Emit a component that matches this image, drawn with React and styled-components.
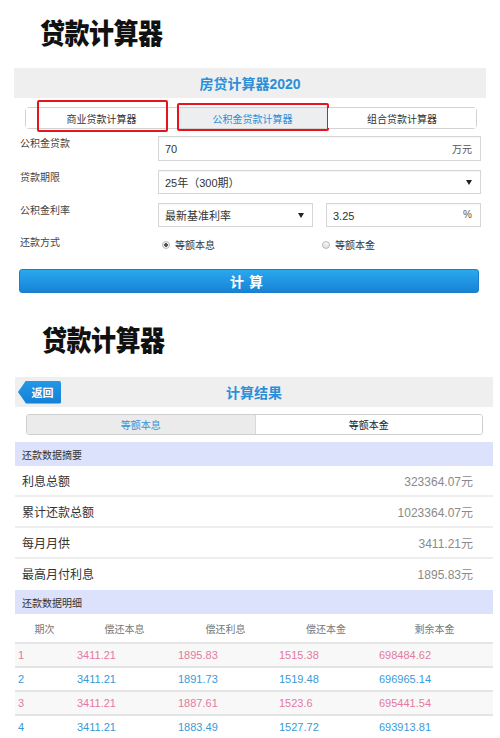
import React from 'react';
import styled, { createGlobalStyle } from 'styled-components';

const GlobalStyle = createGlobalStyle`
  body {
    margin: 0;
    background: #fff;
    font-family: "Liberation Sans", "Noto Sans CJK SC", sans-serif;
    color: #333;
  }
`;

const Page = styled.div`
  width: 500px;
  height: 738px;
  overflow: hidden;
`;

const BigTitle = styled.h1`
  margin: 0;
  padding: ${(p) => p.$top}px 0 0 ${(p) => p.$left}px;
  font-family: "Noto Sans CJK SC", serif;
  font-weight: 900;
  font-size: 25px;
  line-height: 34px;
  letter-spacing: -0.5px;
  color: #111;
  transform: scaleY(1.15);
  transform-origin: left top;
`;

const TopBar = styled.div`
  margin: ${(p) => p.$mt}px ${(p) => p.$mr}px 0 ${(p) => p.$ml}px;
  height: 30px;
  background: #efefef;
  display: grid;
  grid-template-columns: 1fr auto 1fr;
  align-items: center;
`;

const BarTitle = styled.div`
  grid-column: 2;
  color: #2b8fd8;
  font-weight: bold;
  font-size: 14px;
`;

const Tabs = styled.div`
  margin: 9px 23px 0 25px;
  height: 22px;
  border: 1px solid #d2d2d2;
  border-radius: 4px;
  display: grid;
  grid-template-columns: 151px 151px 1fr;
  box-sizing: border-box;
`;

const Tab = styled.div`
  position: relative;
  display: flex;
  align-items: center;
  justify-content: center;
  font-size: 10px;
  color: ${(p) => (p.$active ? '#2b8fd8' : '#333')};
  background: ${(p) => (p.$active ? '#eceef0' : '#fff')};
`;

const RedMark = styled.span`
  position: absolute;
  left: ${(p) => p.$l}px;
  right: ${(p) => p.$r}px;
  top: ${(p) => p.$t}px;
  bottom: ${(p) => p.$b}px;
  border: 2px solid #e8141c;
  border-radius: 2px;
  pointer-events: none;
`;

const Form = styled.div`
  margin: 7px 19px 0 20px;
  display: flex;
  flex-direction: column;
  gap: 9px;
`;

const Row = styled.div`
  display: grid;
  grid-template-columns: 138px 1fr;
  align-items: start;
`;

const Label = styled.div`
  font-size: 10px;
  line-height: 14px;
  color: #444;
  padding-top: ${(p) => p.$pt || 0}px;
`;

const Fields = styled.div`
  display: grid;
  grid-template-columns: ${(p) => (p.$split ? '1fr 1fr' : '1fr')};
  gap: 13px;
`;

const Field = styled.div`
  height: ${(p) => p.$h || 24}px;
  border: 1px solid #d6d6d6;
  box-shadow: inset 0 1px 1px rgba(0, 0, 0, 0.04);
  box-sizing: border-box;
  display: flex;
  align-items: center;
  justify-content: space-between;
  padding: 0 8px 0 6px;
  font-size: 11px;
  color: #333;
`;

const Unit = styled.span`
  color: #555;
  font-size: 10px;
  align-self: ${(p) => (p.$top ? 'flex-start' : 'center')};
  margin-top: ${(p) => (p.$top ? 5 : 0)}px;
`;

const Caret = styled.span`
  width: 0;
  height: 0;
  border-left: 3px solid transparent;
  border-right: 3px solid transparent;
  border-top: 5px solid #222;
`;

const Radios = styled.div`
  display: grid;
  grid-template-columns: 160px 1fr;
  padding-left: 4px;
  padding-top: 1px;
`;

const RadioItem = styled.label`
  display: flex;
  align-items: center;
  gap: 5px;
  font-size: 10px;
  color: #333;
`;

const Dot = styled.span`
  width: 8px;
  height: 8px;
  border-radius: 50%;
  border: 1px solid #b8b8b8;
  background: ${(p) => (p.$on ? 'radial-gradient(circle, #555 0 1.6px, #f2f2f2 2px)' : 'linear-gradient(#fafafa, #ddd)')};
  box-sizing: border-box;
`;

const CalcButton = styled.button`
  display: block;
  margin: 17px 21px 0 19px;
  width: calc(100% - 40px);
  height: 24px;
  border: 1px solid #1b7dcc;
  border-radius: 3px;
  background: linear-gradient(#2aa8ee, #1783d6);
  color: #fff;
  font-family: "Noto Sans CJK SC", sans-serif;
  font-weight: bold;
  font-size: 14px;
  letter-spacing: 5px;
  padding: 0;
  line-height: 20px;
`;

const BackButton = styled.div`
  grid-column: 1;
  justify-self: start;
  margin-left: 3px;
  width: 43px;
  height: 23px;
  background: linear-gradient(#2497e6, #1381d6);
  clip-path: polygon(0 50%, 8px 0, 100% 0, 100% 100%, 8px 100%);
  border-radius: 0 2px 2px 0;
  color: #fff;
  font-weight: bold;
  font-size: 11px;
  display: flex;
  align-items: center;
  justify-content: center;
  padding-left: 6px;
  box-sizing: border-box;
`;

const Segment = styled.div`
  margin: 7px 17px 0 26px;
  height: 21px;
  border: 1px solid #cfcfcf;
  border-radius: 3px;
  display: grid;
  grid-template-columns: 1fr 1fr;
  box-sizing: border-box;
  overflow: hidden;
`;

const SegItem = styled.div`
  display: flex;
  align-items: center;
  justify-content: center;
  font-size: 10px;
  color: ${(p) => (p.$active ? '#3a8fd9' : '#222')};
  background: ${(p) => (p.$active ? '#ebebeb' : '#fff')};
  border-left: ${(p) => (p.$active ? 'none' : '1px solid #d8d8d8')};
`;

const Result = styled.div`
  margin: 7px 7px 0 15px;
`;

const SectionHead = styled.div`
  height: 24px;
  background: #dde2fc;
  display: flex;
  align-items: center;
  padding-left: 7px;
  font-size: 10px;
  color: #333;
`;

const SumRow = styled.div`
  height: 29px;
  border-bottom: 2px solid ${(p) => (p.$last ? 'transparent' : '#eeeeee')};
  display: flex;
  align-items: center;
  justify-content: space-between;
  padding: 0 20px 0 7px;
  font-size: 12px;
`;

const SumValue = styled.span`
  color: #8a8a8a;
`;

const Table = styled.div`
  display: grid;
  grid-template-columns: 59px 101px 101px 100px 1fr;
`;

const HeadCell = styled.div`
  height: 28px;
  border-bottom: 2px solid #e6e6e6;
  display: flex;
  align-items: center;
  justify-content: center;
  font-size: 10px;
  color: #777;
`;

const Cell = styled.div`
  height: 22px;
  border-bottom: 2px solid #e4e4e4;
  display: flex;
  align-items: center;
  padding-left: 3px;
  font-size: 11px;
  color: ${(p) => (p.$odd ? '#e5799f' : '#3a9ad8')};
  background: ${(p) => (p.$odd ? '#f8f8f8' : '#fff')};
`;

const summary = [
  ['利息总额', '323364.07元'],
  ['累计还款总额', '1023364.07元'],
  ['每月月供', '3411.21元'],
  ['最高月付利息', '1895.83元'],
];

const heads = ['期次', '偿还本息', '偿还利息', '偿还本金', '剩余本金'];

const rows = [
  ['1', '3411.21', '1895.83', '1515.38', '698484.62'],
  ['2', '3411.21', '1891.73', '1519.48', '696965.14'],
  ['3', '3411.21', '1887.61', '1523.6', '695441.54'],
  ['4', '3411.21', '1883.49', '1527.72', '693913.81'],
];

export default function App() {
  return (
    <Page>
      <GlobalStyle />
      <BigTitle $top={10} $left={40}>贷款计算器</BigTitle>

      <TopBar $mt={24} $mr={14} $ml={14}>
        <BarTitle>房贷计算器2020</BarTitle>
      </TopBar>

      <Tabs>
        <Tab>
          商业贷款计算器
          <RedMark $l={11} $r={9} $t={-8} $b={-4} />
        </Tab>
        <Tab $active>
          公积金贷款计算器
          <RedMark $l={0} $r={-1} $t={-5} $b={-3} />
        </Tab>
        <Tab>组合贷款计算器</Tab>
      </Tabs>

      <Form>
        <Row>
          <Label $pt={1}>公积金贷款</Label>
          <Fields>
            <Field $h={25}>
              <span>70</span>
              <Unit>万元</Unit>
            </Field>
          </Fields>
        </Row>
        <Row>
          <Label $pt={1}>贷款期限</Label>
          <Fields>
            <Field>
              <span>25年（300期）</span>
              <Caret />
            </Field>
          </Fields>
        </Row>
        <Row>
          <Label $pt={1}>公积金利率</Label>
          <Fields $split>
            <Field>
              <span>最新基准利率</span>
              <Caret />
            </Field>
            <Field>
              <span style={{ paddingTop: 2 }}>3.25</span>
              <Unit $top>%</Unit>
            </Field>
          </Fields>
        </Row>
        <Row>
          <Label $pt={0}>还款方式</Label>
          <Radios>
            <RadioItem>
              <Dot $on />
              等额本息
            </RadioItem>
            <RadioItem>
              <Dot />
              等额本金
            </RadioItem>
          </Radios>
        </Row>
      </Form>

      <CalcButton>计算</CalcButton>

      <BigTitle $top={22} $left={42}>贷款计算器</BigTitle>

      <TopBar $mt={28} $mr={7} $ml={15}>
        <BackButton>返回</BackButton>
        <BarTitle>计算结果</BarTitle>
      </TopBar>

      <Segment>
        <SegItem $active>等额本息</SegItem>
        <SegItem>等额本金</SegItem>
      </Segment>

      <Result>
        <SectionHead>还款数据摘要</SectionHead>
        {summary.map(([k, v], i) => (
          <SumRow key={k} $last={i === summary.length - 1}>
            <span>{k}</span>
            <SumValue>{v}</SumValue>
          </SumRow>
        ))}
        <SectionHead>还款数据明细</SectionHead>
        <Table>
          {heads.map((h) => (
            <HeadCell key={h}>{h}</HeadCell>
          ))}
          {rows.map((r, i) => r.map((c, j) => (
            <Cell key={`${i}-${j}`} $odd={i % 2 === 0}>{c}</Cell>
          )))}
        </Table>
      </Result>
    </Page>
  );
}
